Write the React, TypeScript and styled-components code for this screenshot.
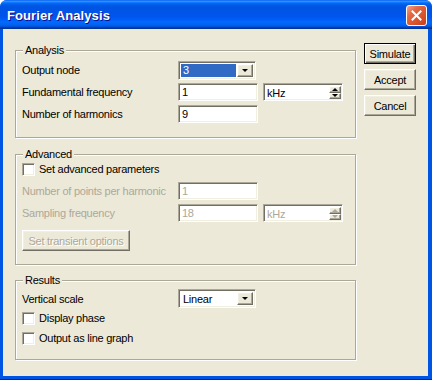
import React from "react";
import styled, { createGlobalStyle, css } from "styled-components";

const Global = createGlobalStyle`
  html, body { margin: 0; padding: 0; background: #fff; }
  body { font-family: "Liberation Sans", Arial, sans-serif; font-size: 11px; letter-spacing: -0.25px; }
  * { box-sizing: border-box; }
`;

const Win = styled.div`
  width: 432px;
  height: 380px;
  background: #0054e3;
  display: flex;
  flex-direction: column;
  border-radius: 7px 7px 0 0;
  overflow: hidden;
  border-bottom: 1px solid #001ea0;
`;

const TitleBar = styled.div`
  height: 29px;
  flex: none;
  display: flex;
  align-items: center;
  justify-content: space-between;
  padding: 0 5px 0 7px;
  background: linear-gradient(
    to bottom,
    #0058ee 0%,
    #3593ff 4%,
    #288eff 6%,
    #127dff 8%,
    #036ffc 10%,
    #0262ee 14%,
    #0057e5 20%,
    #0054e3 24%,
    #0055eb 56%,
    #005bf5 66%,
    #026afe 76%,
    #0062ef 86%,
    #0052d6 92%,
    #0040ab 94%,
    #003092 100%
  );
`;

const Title = styled.span`
  color: #fff;
  font-family: "Liberation Sans", Arial, sans-serif;
  font-weight: bold;
  font-size: 13px;
  letter-spacing: 0.1px;
  text-shadow: 1px 1px 0 #0f1089;
  margin-top: 1px;
`;

const CloseBtn = styled.div`
  width: 21px;
  height: 21px;
  border: 1px solid #fff;
  border-radius: 3px;
  background: linear-gradient(135deg, #f2a68c 0%, #e56a45 30%, #d9532b 65%, #c8401c 100%);
  display: flex;
  align-items: center;
  justify-content: center;
  margin-top: 1px;
`;

const Client = styled.div`
  flex: 1;
  margin: 0 4px 3px 3px;
  background: #ece9d8;
  display: flex;
  gap: 8px;
  padding: 0 12px 0 12px;
`;

const LeftCol = styled.div`
  width: 341px;
  padding-top: 21px;
  display: flex;
  flex-direction: column;
`;

const RightCol = styled.div`
  width: 52px;
  padding-top: 14px;
  display: flex;
  flex-direction: column;
  gap: 5px;
`;

const Group = styled.div<{ $pt: number; $pb: number; $mt?: number }>`
  position: relative;
  border: 1px solid #aca899;
  box-shadow: 1px 1px 0 #fff, inset 1px 1px 0 #fff;
  padding: ${(p) => p.$pt}px 6px ${(p) => p.$pb}px 6px;
  margin-top: ${(p) => p.$mt ?? 0}px;
  display: flex;
  flex-direction: column;
`;

const Legend = styled.span`
  position: absolute;
  top: -7px;
  left: 7px;
  padding: 0 2px;
  background: #ece9d8;
  line-height: 13px;
  color: #000;
`;

const Row = styled.div<{ $h?: number; $mt?: number }>`
  display: flex;
  align-items: center;
  height: ${(p) => p.$h ?? 18}px;
  margin-top: ${(p) => p.$mt ?? 0}px;
`;

const Label = styled.span<{ $disabled?: boolean }>`
  width: 156px;
  color: ${(p) => (p.$disabled ? "#aca899" : "#000")};
  white-space: nowrap;
`;

const sunken = css`
  border: 1px solid;
  border-color: #aca899 #fff #fff #aca899;
  box-shadow: inset 1px 1px 0 #716f64, inset -1px -1px 0 #f1efe2;
`;

const raised = css`
  border: 1px solid;
  border-color: #fff #716f64 #716f64 #fff;
  box-shadow: inset -1px -1px 0 #aca899, inset 1px 1px 0 #f1efe2;
  background: #ece9d8;
`;

const Input = styled.div<{ $disabled?: boolean; $w?: number }>`
  ${sunken};
  width: ${(p) => p.$w ?? 80}px;
  height: 18px;
  background: #fff;
  color: ${(p) => (p.$disabled ? "#aca899" : "#000")};
  padding: 0 0 0 3px;
  display: flex;
  align-items: center;
  line-height: 14px;
`;

const Combo = styled.div<{ $w?: number }>`
  ${sunken};
  width: ${(p) => p.$w ?? 78}px;
  height: 19px;
  background: #fff;
  display: flex;
  align-items: stretch;
  padding: 2px;
`;

const ComboText = styled.div<{ $selected?: boolean }>`
  flex: 1;
  display: flex;
  align-items: center;
  padding-left: 2px;
  margin-right: 1px;
  background: ${(p) => (p.$selected ? "#316ac5" : "transparent")};
  color: ${(p) => (p.$selected ? "#fff" : "#000")};
`;

const ArrowBtn = styled.div`
  ${raised};
  width: 16px;
  display: flex;
  align-items: center;
  justify-content: center;
`;

const Tri = styled.div<{ $up?: boolean; $color?: string; $size?: number }>`
  width: 0;
  height: 0;
  border-left: ${(p) => p.$size ?? 4}px solid transparent;
  border-right: ${(p) => p.$size ?? 4}px solid transparent;
  ${(p) =>
    p.$up
      ? `border-bottom: ${p.$size ?? 4}px solid ${p.$color ?? "#000"};`
      : `border-top: ${p.$size ?? 4}px solid ${p.$color ?? "#000"};`}
`;

const SpinBox = styled.div<{ $disabled?: boolean }>`
  ${sunken};
  margin-left: 5px;
  width: 80px;
  height: 18px;
  background: #fff;
  display: flex;
  align-items: stretch;
  padding: 2px 1px 1px 2px;
  color: ${(p) => (p.$disabled ? "#aca899" : "#000")};
`;

const SpinText = styled.div`
  flex: 1;
  display: flex;
  align-items: center;
  padding-left: 1px;
`;

const SpinCol = styled.div`
  width: 12px;
  display: flex;
  flex-direction: column;
`;

const SpinBtn = styled.div`
  ${raised};
  flex: 1;
  display: flex;
  align-items: center;
  justify-content: center;
`;

const Check = styled.div`
  ${sunken};
  width: 13px;
  height: 13px;
  background: #fff;
  margin-right: 4px;
  flex: none;
`;

const CheckLabel = styled.span`
  color: #000;
`;

const PushButton = styled.div<{ $default?: boolean; $disabled?: boolean; $w?: number; $mt?: number }>`
  ${raised};
  width: ${(p) => (p.$w ? `${p.$w}px` : "100%")};
  height: 21px;
  margin-top: ${(p) => p.$mt ?? 0}px;
  display: flex;
  align-items: center;
  justify-content: center;
  color: ${(p) => (p.$disabled ? "#aca899" : "#000")};
  ${(p) => p.$disabled && "text-shadow: 1px 1px 0 #fff;"}
  ${(p) =>
    p.$default &&
    css`
      border: 1px solid #000;
      box-shadow: inset 1px 1px 0 #fff, inset -1px -1px 0 #716f64, inset -2px -2px 0 #aca899;
    `}
`;

function ComboBox({ value, selected, w }: { value: string; selected?: boolean; w?: number }) {
  return (
    <Combo $w={w}>
      <ComboText $selected={selected}>{value}</ComboText>
      <ArrowBtn>
        <Tri $size={3.5} />
      </ArrowBtn>
    </Combo>
  );
}

function Spin({ value, disabled }: { value: string; disabled?: boolean }) {
  const c = disabled ? "#aca899" : "#000";
  return (
    <SpinBox $disabled={disabled}>
      <SpinText>{value}</SpinText>
      <SpinCol>
        <SpinBtn>
          <Tri $up $size={3} $color={c} />
        </SpinBtn>
        <SpinBtn>
          <Tri $size={3} $color={c} />
        </SpinBtn>
      </SpinCol>
    </SpinBox>
  );
}

export default function App() {
  return (
    <>
      <Global />
      <Win>
        <TitleBar>
          <Title>Fourier Analysis</Title>
          <CloseBtn>
            <svg width="11" height="11" viewBox="0 0 11 11">
              <path d="M1.5 1.5 L9.5 9.5 M9.5 1.5 L1.5 9.5" stroke="#fff" strokeWidth="2" strokeLinecap="square" />
            </svg>
          </CloseBtn>
        </TitleBar>
        <Client>
          <LeftCol>
            <Group $pt={10} $pb={14}>
              <Legend>Analysis</Legend>
              <Row>
                <Label>Output node</Label>
                <ComboBox value="3" selected />
              </Row>
              <Row $mt={4}>
                <Label>Fundamental frequency</Label>
                <Input>1</Input>
                <Spin value="kHz" />
              </Row>
              <Row $mt={4}>
                <Label>Number of harmonics</Label>
                <Input>9</Input>
              </Row>
            </Group>

            <Group $pt={5} $pb={13} $mt={16}>
              <Legend>Advanced</Legend>
              <Row>
                <Check />
                <CheckLabel>Set advanced parameters</CheckLabel>
              </Row>
              <Row $mt={4}>
                <Label $disabled>Number of points per harmonic</Label>
                <Input $disabled>1</Input>
              </Row>
              <Row $mt={4}>
                <Label $disabled>Sampling frequency</Label>
                <Input $disabled>18</Input>
                <Spin value="kHz" disabled />
              </Row>
              <PushButton $disabled $w={108} $mt={8}>
                Set transient options
              </PushButton>
            </Group>

            <Group $pt={8} $pb={11} $mt={15}>
              <Legend>Results</Legend>
              <Row $h={19}>
                <Label>Vertical scale</Label>
                <ComboBox value="Linear" />
              </Row>
              <Row $h={20}>
                <Check />
                <CheckLabel>Display phase</CheckLabel>
              </Row>
              <Row $h={20}>
                <Check />
                <CheckLabel>Output as line graph</CheckLabel>
              </Row>
            </Group>
          </LeftCol>
          <RightCol>
            <PushButton $default>Simulate</PushButton>
            <PushButton>Accept</PushButton>
            <PushButton>Cancel</PushButton>
          </RightCol>
        </Client>
      </Win>
    </>
  );
}
